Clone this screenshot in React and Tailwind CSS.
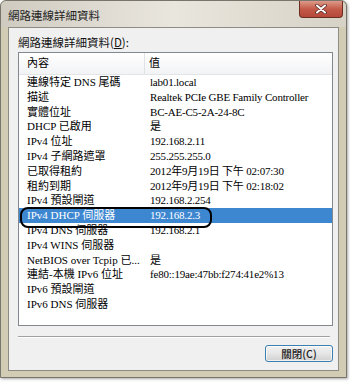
const rows = [
  ["連線特定 DNS 尾碼", "lab01.local"],
  ["描述", "Realtek PCIe GBE Family Controller"],
  ["實體位址", "BC-AE-C5-2A-24-8C"],
  ["DHCP 已啟用", "是"],
  ["IPv4 位址", "192.168.2.11"],
  ["IPv4 子網路遮罩", "255.255.255.0"],
  ["已取得租約", "2012年9月19日 下午 02:07:30"],
  ["租約到期", "2012年9月19日 下午 02:18:02"],
  ["IPv4 預設閘道", "192.168.2.254"],
  ["IPv4 DHCP 伺服器", "192.168.2.3"],
  ["IPv4 DNS 伺服器", "192.168.2.1"],
  ["IPv4 WINS 伺服器", ""],
  ["NetBIOS over Tcpip 已...", "是"],
  ["連結-本機 IPv6 位址", "fe80::19ae:47bb:f274:41e2%13"],
  ["IPv6 預設閘道", ""],
  ["IPv6 DNS 伺服器", ""],
];

const serif = { fontFamily: '"Liberation Serif", "Noto Sans CJK TC", serif' };
const sans = { fontFamily: '"Noto Sans CJK TC", "Liberation Sans", sans-serif' };

export default function App() {
  return (
    <div className="w-[350px] h-[384px] bg-white" style={sans}>
      <div className="w-[347px] h-[378px] flex flex-col border border-[#77756c] rounded-t-[6px] bg-[#d3ccb5] shadow-[1px_1px_3px_rgba(0,0,0,0.35)]">
        <div className="h-[26px] shrink-0 flex justify-between rounded-t-[6px] bg-gradient-to-r from-[#cfcbc1] via-[#e9e6de] to-[#d6d2c6]">
          <div className="pl-[7px] pt-[7px] text-[11.5px] leading-[14px] text-[#222]">網路連線詳細資料</div>
          <div className="w-[44px] h-[17px] mr-[3px] rounded-b-[4px] border border-t-0 border-[#6e2b20] bg-gradient-to-b from-[#dc9a8a] via-[#c45a48] to-[#b4483a] flex items-center justify-center">
            <svg width="12" height="10" viewBox="0 0 12 10">
              <path d="M2 1.5 L10 8.5 M10 1.5 L2 8.5" stroke="#5a2a22" strokeWidth="3.6" strokeLinecap="round" />
              <path d="M2 1.5 L10 8.5 M10 1.5 L2 8.5" stroke="#ffffff" strokeWidth="2" strokeLinecap="round" />
            </svg>
          </div>
        </div>
        <div className="flex-1 mx-[7px] mb-[6px] border border-[#8d8b82] bg-[#f0f0f0] flex flex-col pl-[9px]">
          <div className="mt-[7px] text-[11.5px] leading-[14px] text-[#111]">網路連線詳細資料(<span className="underline">D</span>):</div>
          <div className="relative mt-[3px] w-[315px] h-[274px] border border-[#828790] bg-white" style={serif}>
            <div className="h-[22px] flex border-b border-[#e3e5e8] bg-gradient-to-b from-white to-[#f2f3f5] text-[11px] text-black" style={serif}>
              <div className="w-[126px] pl-[8px] flex items-center border-r border-[#e0e2e5]">內容</div>
              <div className="pl-[4px] flex items-center">值</div>
            </div>
            {rows.map(([k, v], i) => (
              <div
                key={i}
                className={
                  "h-[14.8px] flex text-[11px] leading-[14.8px] whitespace-nowrap " +
                  (i === 9 ? "bg-[#3d87d1] text-white" : "text-black")
                }
              >
                <div className="w-[131px] pl-[8px] overflow-hidden">{k}</div>
                <div className="tracking-[-0.2px]">{v}</div>
              </div>
            ))}
            <div className="absolute left-[1px] top-[154px] w-[192px] h-[21px] border-[2.5px] border-black rounded-[8px]"></div>
          </div>
          <div className="mt-[10px] w-[312px] h-[2px] border-t border-[#a0a0a0] border-b border-b-white"></div>
          <div className="w-[315px] flex justify-end mt-[7px]">
            <div className="w-[68px] h-[17px] rounded-[3px] border border-[#3c7fb1] bg-gradient-to-b from-[#f2f2f2] via-[#e6e6e6] to-[#d0d0d0] shadow-[inset_0_0_0_1px_rgba(255,255,255,0.7)] flex items-center justify-center text-[10.5px] font-medium text-[#222]">
              關閉(C)
            </div>
          </div>
        </div>
      </div>
    </div>
  );
}
